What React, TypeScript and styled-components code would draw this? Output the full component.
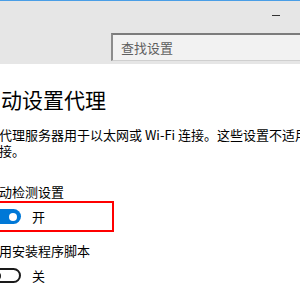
import styled, { createGlobalStyle } from "styled-components";

const GlobalStyle = createGlobalStyle`
  html, body {
    margin: 0;
    padding: 0;
    width: 300px;
    height: 300px;
    overflow: hidden;
    background: #ffffff;
  }
  body {
    font-family: "Noto Sans CJK SC", "Noto Sans", sans-serif;
    color: #000000;
  }
`;

const TitleBar = styled.div`
  height: 64px;
  box-sizing: border-box;
  background: #e6e6e6;
  border-top: 1px solid #4a9ee6;
  display: flex;
  flex-direction: column;
`;

const Controls = styled.div`
  height: 32px;
  display: flex;
  justify-content: flex-end;
`;

const ControlButton = styled.div`
  width: 48px;
  height: 28px;
  display: flex;
  align-items: center;
  justify-content: center;
`;

const MinimizeDash = styled.span`
  width: 8px;
  height: 1px;
  background: #333333;
`;

const SearchBox = styled.div`
  margin-left: 111px;
  height: 28px;
  box-sizing: border-box;
  background: #f2f2f2;
  border-top: 2px solid #7c7c7c;
  border-left: 2px solid #8c8c8c;
  border-bottom: 1px solid #cfcfcf;
  display: flex;
  align-items: center;
  padding-left: 8px;
  font-size: 13px;
  color: #5f5f5f;
  white-space: nowrap;
`;

const Content = styled.div`
  margin-left: -14px;
  display: flex;
  flex-direction: column;
  align-items: flex-start;
  white-space: nowrap;
`;

const Heading = styled.h1`
  margin: 21px 0 0 -6px;
  font-size: 21px;
  line-height: 28px;
  font-weight: 400;
`;

const Description = styled.p`
  margin: 14px 0 0;
  font-size: 13px;
  line-height: 16px;
`;

const Label = styled.div<{ $gap: number }>`
  margin-top: ${(p) => p.$gap}px;
  font-size: 13px;
  line-height: 18px;
`;

const ToggleRow = styled.div<{ $highlighted?: boolean }>`
  margin-left: -6px;
  width: 134px;
  height: 31px;
  box-sizing: border-box;
  border: 2px solid ${(p) => (p.$highlighted ? "#ff0000" : "transparent")};
  padding-left: 5px;
  display: flex;
  align-items: center;
  gap: 11px;
  font-size: 13px;
`;

const Switch = styled.div<{ $on: boolean }>`
  width: 34px;
  height: 15px;
  box-sizing: border-box;
  border-radius: 8px;
  background: ${(p) => (p.$on ? "#0078d7" : "transparent")};
  border: ${(p) => (p.$on ? "none" : "2px solid #1a1a1a")};
  display: flex;
  align-items: center;
  justify-content: ${(p) => (p.$on ? "flex-end" : "flex-start")};
  padding: 0 4px;
`;

const Knob = styled.span<{ $on: boolean }>`
  width: 8px;
  height: 8px;
  border-radius: 50%;
  background: ${(p) => (p.$on ? "#ffffff" : "#1a1a1a")};
`;

const App = () => {
  return <>
    <GlobalStyle />
    <TitleBar>
      <Controls>
        <ControlButton>
          <MinimizeDash />
        </ControlButton>
      </Controls>
      <SearchBox>查找设置</SearchBox>
    </TitleBar>
    <Content>
      <Heading>自动设置代理</Heading>
      <Description>
        将代理服务器用于以太网或 Wi-Fi 连接。这些设置不适用于 VPN<br />连接。
      </Description>
      <Label $gap={24}>自动检测设置</Label>
      <ToggleRow $highlighted>
        <Switch $on><Knob $on /></Switch>
        <span>开</span>
      </ToggleRow>
      <Label $gap={10}>使用安装程序脚本</Label>
      <ToggleRow>
        <Switch $on={false}><Knob $on={false} /></Switch>
        <span>关</span>
      </ToggleRow>
    </Content>
  </>
}

export default App
